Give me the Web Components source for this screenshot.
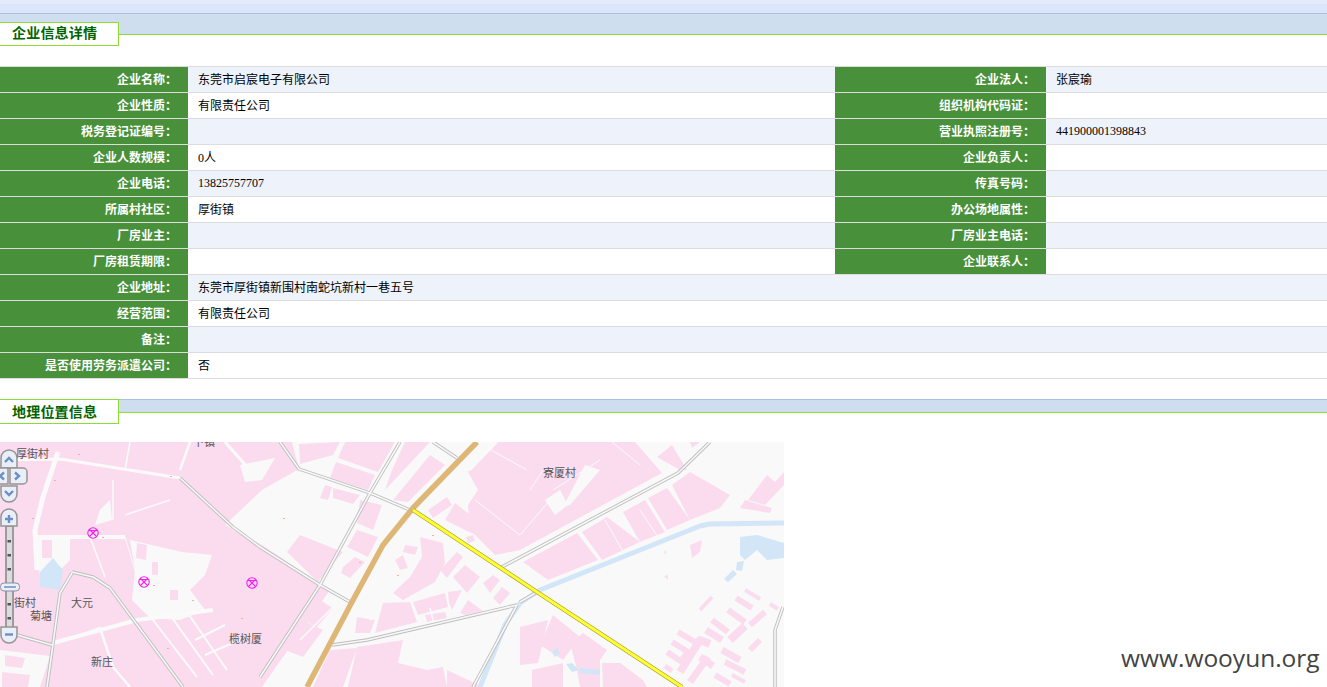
<!DOCTYPE html>
<html lang="zh">
<head>
<meta charset="utf-8">
<title>企业信息详情</title>
<style>
  html, body { margin: 0; padding: 0; background: #fff; overflow: hidden; }
  body { height: 687px; position: relative; font-family: "Liberation Serif", "Noto Sans CJK SC", serif; }
  .top-strip { height: 13px; background: linear-gradient(#e4ecfc 0, #e4ecfc 4px, #dbe6fa 4px); }
</style>
</head>
<body>
<div class="top-strip"></div>

<section-head title-text="企业信息详情" band="22"></section-head>

<info-table>
  <info-row alt><info-cell label="企业名称" wide>东莞市启宸电子有限公司</info-cell><info-cell label="企业法人">张宸瑜</info-cell></info-row>
  <info-row><info-cell label="企业性质" wide>有限责任公司</info-cell><info-cell label="组织机构代码证"></info-cell></info-row>
  <info-row alt><info-cell label="税务登记证编号" wide></info-cell><info-cell label="营业执照注册号" num>441900001398843</info-cell></info-row>
  <info-row><info-cell label="企业人数规模" wide>0人</info-cell><info-cell label="企业负责人"></info-cell></info-row>
  <info-row alt><info-cell label="企业电话" wide num>13825757707</info-cell><info-cell label="传真号码"></info-cell></info-row>
  <info-row><info-cell label="所属村社区" wide>厚街镇</info-cell><info-cell label="办公场地属性"></info-cell></info-row>
  <info-row alt><info-cell label="厂房业主" wide></info-cell><info-cell label="厂房业主电话"></info-cell></info-row>
  <info-row><info-cell label="厂房租赁期限" wide></info-cell><info-cell label="企业联系人"></info-cell></info-row>
  <info-row alt><info-cell label="企业地址" full>东莞市厚街镇新围村南蛇坑新村一巷五号</info-cell></info-row>
  <info-row><info-cell label="经营范围" full>有限责任公司</info-cell></info-row>
  <info-row alt><info-cell label="备注" full></info-cell></info-row>
  <info-row><info-cell label="是否使用劳务派遣公司" full>否</info-cell></info-row>
</info-table>

<section-head title-text="地理位置信息" band="14" flush></section-head>

<geo-map></geo-map>
<water-mark>www.wooyun.org</water-mark>

<script>
class SectionHead extends HTMLElement {
  connectedCallback() {
    const band = this.getAttribute("band");
    const root = this.attachShadow({ mode: "open" });
    root.innerHTML = `
      <style>
        :host { display: grid; }
        :host([flush]) { margin-top: 20px; }
        .band, .title { grid-area: 1 / 1; }
        .band {
          height: ${band}px;
          box-sizing: border-box;
          background: #cfdeee;
          border-top: 1px solid #a9bfe3;
          border-bottom: 1px solid #8fdc35;
        }
        .title {
          justify-self: start;
          width: 119px;
          height: 24px;
          margin-top: ${band == 22 ? 9 : 0}px;
          box-sizing: border-box;
          border: 1px solid #8fdc35;
          border-left: 0;
          background: #fff;
          padding-left: 12px;
          font: bold 14px/19px "Noto Sans CJK SC", sans-serif;
          letter-spacing: 0.2px;
          color: #006400;
        }
        :host([flush]) .title { height: 25px; line-height: 22px; }
      </style>
      <div class="band"></div>
      <div class="title">${this.getAttribute("title-text")}</div>`;
  }
}
customElements.define("section-head", SectionHead);

class InfoTable extends HTMLElement {
  constructor() {
    super();
    this.attachShadow({ mode: "open" }).innerHTML = `
      <style>
        :host { display: block; margin-top: 20px; border-top: 1px solid #dddddd; }
      </style>
      <slot></slot>`;
  }
}
customElements.define("info-table", InfoTable);

class InfoRow extends HTMLElement {
  constructor() {
    super();
    this.attachShadow({ mode: "open" }).innerHTML = `
      <style>
        :host {
          display: flex;
          height: 26px;
          box-sizing: border-box;
          border-bottom: 1px solid #dddddd;
          background: #fff;
        }
        :host([alt]) { background: #edf2fb; }
      </style>
      <slot></slot>`;
  }
}
customElements.define("info-row", InfoRow);

class InfoCell extends HTMLElement {
  constructor() {
    super();
    const label = this.getAttribute("label");
    this.attachShadow({ mode: "open" }).innerHTML = `
      <style>
        :host { display: flex; flex: 1; min-width: 0; }
        :host([wide]) { flex: 0 0 835px; }
        :host([full]) { flex: 1; }
        .label {
          flex: 0 0 188px;
          box-sizing: border-box;
          background: #48903a;
          color: #fff;
          font: bold 12px/23px "Noto Sans CJK SC", sans-serif;
          text-align: right;
          padding-right: 11px;
          white-space: nowrap;
        }
        :host(:not([wide]):not([full])) .label { flex-basis: 211px; padding-right: 11px; }
        .value {
          flex: 1;
          padding-left: 10px;
          font: 12px/27px "Liberation Serif", "Noto Sans CJK SC", serif;
          color: #000;
          white-space: nowrap;
        }
        :host([num]) .value { line-height: 25px; }
      </style>
      <div class="label">${label}：</div>
      <div class="value"><slot></slot></div>`;
  }
}
customElements.define("info-cell", InfoCell);

const PINK = [
  "0,442 292,442 299,469 262,490 225,525 262,545 330,590 262,687 0,687",
  "345,442 395,442 378,472 338,458", "299,444 340,442 333,455 300,464",
  "336,462 375,475 368,490 330,478", "333,488 360,495 353,504 333,498",
  "320,498 325,485 332,487 328,500", "405,442 430,442 385,490 392,470",
  "393,500 430,455 445,465 408,502", "287,552 300,535 343,552 318,582",
  "357,530 378,537 368,557 347,547", "360,500 382,505 373,530 357,523",
  "343,567 355,557 365,562 350,578 341,573", "315,597 333,608 317,627 298,617",
  "302,620 323,630 303,657 285,650", "330,650 357,648 343,687 313,687",
  "357,647 403,640 398,663 427,670 443,667 447,687 348,687", "447,670 483,687 447,687",
  "420,537 443,543 445,563 435,582 403,600 393,593 410,577 422,557",
  "428,510 447,497 452,505 433,518", "445,520 455,503 473,517 476,535 465,530",
  "440,570 457,552 463,557 447,578", "453,577 465,565 480,577 467,593",
  "483,583 493,575 500,580 490,593", "493,598 502,587 510,593 500,605",
  "413,602 445,593 448,607 418,615", "425,615 445,612 447,618 427,622",
  "375,633 383,603 410,602 417,622", "355,633 357,617 375,620 370,633",
  "460,613 468,600 483,611 465,615", "449,603 448,592 462,590 452,610",
  "497,442 635,442 662,473 520,550 495,555 470,530 468,505 478,490 468,472",
  "523,562 577,533 598,560 548,580", "582,532 607,517 640,542 602,560",
  "623,512 645,500 665,532 640,542", "648,498 667,488 690,520 667,530",
  "672,485 690,472 730,495 720,508 690,520",
  "748,500 767,475 775,482 784,472 784,485 765,505", "740,508 745,500 772,508 770,513",
  "657,457 672,445 687,470 680,470", "690,442 700,442 692,448",
  "553,615 580,637 563,660 540,645", "570,643 583,633 607,650 600,660 600,687 580,687 577,670",
  "602,663 620,663 643,680 647,687 603,687", "520,627 548,620 538,663 520,665",
  "532,670 563,663 563,687 532,687",
  "690,545 702,540 700,552 692,558", "664,552 666,550 666,555",
  "664,576 668,575 668,580", "466,537 473,535 475,541 468,543",
  "405,545 418,547 415,555 403,552", "395,560 403,555 408,568 400,570"
];
const LIGHT_AREAS = [
  "130,540 182,552 212,555 205,575 190,590 205,610 180,620 150,618 132,600 135,570",
  "33,535 70,535 70,560 60,570 40,575",
  "563,507 585,465 600,470 570,505", "545,500 560,490 568,505 555,515",
  "100,510 110,500 112,520 95,525", "240,465 275,458 262,480 245,482",
  "0,650 50,656 40,687 0,687"
];
const PINK_INSETS = [
  "137,543 147,545 146,560 136,558", "152,562 158,562 158,575 152,575",
  "170,590 178,590 178,600 170,600", "42,540 52,540 52,558 42,558",
  "5,655 25,658 22,668 5,666", "2,672 30,675 28,687 2,687"
];
const WHITE_ROADS = [
  ["58,452 43,497 35,530 37,570", 5], ["0,460 60,459 180,478", 3], ["40,537 125,537", 4],
  ["53,643 137,620 213,610", 4], ["153,620 197,677", 2], ["170,615 213,675", 2],
  ["187,612 227,670", 2], ["195,640 225,625", 2], ["205,655 240,640", 2],
  ["90,537 105,577", 1.5], ["125,537 137,577", 1], ["77,637 100,628 113,667 130,687", 2.5],
  ["130,442 125,470", 1.5], ["190,442 180,470", 2.5],
  ["225,442 250,470", 3], ["113,480 113,520", 1.5], ["125,515 170,500", 1.5],
  ["553,490 600,460", 1], ["612,442 640,465", 1],
  ["497,442 470,470", 2], ["484,446 527,470", 1], ["475,500 520,535 550,500", 1],
  ["640,510 660,540", 1], ["605,520 625,555", 1], ["543,470 530,490", 1],
  ["370,620 380,610", 2], ["300,640 340,600", 1.5], ["430,608 438,640", 1.5]
];
const FACTORY = [
  ["678,632 695,642", 6], ["672,642 688,652 680,662", 6], ["667,652 682,662", 6], ["665,666 672,671", 5],
  ["680,672 700,640 710,644", 8], ["700,657 713,666", 7], ["690,682 708,657", 7],
  ["712,620 728,632", 6], ["706,630 722,640", 7], ["728,610 745,622", 6], ["736,598 752,608", 6],
  ["745,590 760,599", 4], ["770,604 778,609", 4], ["730,640 745,626", 8], ["722,650 740,660", 7],
  ["725,662 745,672", 6], ["715,675 730,684", 6], ["750,625 765,612", 6], ["700,610 712,597", 4],
  ["750,650 760,640", 6], ["732,675 745,682", 4]
];
const GRAY_ROADS = [
  "280,442 299,469 370,493 410,510", "400,442 370,493 320,585 260,677",
  "433,442 457,458", "180,478 233,527 260,547 320,585 350,602",
  "72,572 93,577 110,588 183,687", "72,573 60,593 47,687", "17,635 52,645",
  "332,645 367,640 517,605", "517,605 473,687", "710,442 678,473 500,568",
  "520,602 537,592", "783,607 775,630 775,687"
];

class GeoMap extends HTMLElement {
  constructor() {
    super();
    const poly = (pts, fill) => `<polygon points="${pts}" fill="${fill}"/>`;
    const line = (pts, color, w) => `<polyline points="${pts}" fill="none" stroke="${color}" stroke-width="${w}" stroke-linejoin="round"/>`;
    const marker = (x, y) => `<g fill="none" stroke="#f020f0" stroke-width="1.1"><circle cx="${x}" cy="${y}" r="5.2"/><path d="M${x - 3.5} ${y - 3.5}L${x + 3.5} ${y + 3.5}M${x + 3.5} ${y - 3.5}L${x - 3.5} ${y + 3.5}M${x - 4} ${y - 2.5}H${x + 4}"/></g>`;
    const label = (x, y, s) => `<text x="${x}" y="${y}">${s}</text>`;
    const dots = [[78,454],[54,480],[32,518],[170,476],[102,537],[153,585],[192,600],[241,618],[167,648],[283,518],[359,562],[397,575],[432,535]];
    const ticks = [540, 554, 568, 603, 617].map(y => `<rect x="7.5" y="${y}" width="3.5" height="2.5" fill="#555"/>`).join("");
    this.attachShadow({ mode: "open" }).innerHTML = `
      <style>
        :host { display: block; width: 784px; height: 245px; margin-top: 18px; overflow: hidden; }
        svg { display: block; }
        text { font: 11px "Noto Sans CJK SC", sans-serif; fill: #555; }
      </style>
      <svg width="784" height="245" viewBox="0 442 784 245">
        <rect x="0" y="442" width="784" height="245" fill="#f9f9f9"/>
        ${PINK.map(p => poly(p, "#fbdcef")).join("")}
        ${LIGHT_AREAS.map(p => poly(p, "#f9f9f9")).join("")}
        ${PINK_INSETS.map(p => poly(p, "#fbdcef")).join("")}
        ${WHITE_ROADS.map(r => line(r[0], "#fafafa", r[1])).join("")}
        ${FACTORY.map(r => line(r[0], "#fbdcef", r[1])).join("")}
        ${poly("740,537 757,535 784,543 784,558 767,560 757,550 745,560 740,555", "#d2e6f7")}
        ${poly("737,562 744,561 742,571 736,570", "#d2e6f7")}
        ${poly("724,579 733,570 737,574 728,582", "#d2e6f7")}
        ${poly("40,572 53,558 63,570 60,590 40,587", "#d2e6f7")}
        ${poly("552,652 557,648 560,653 555,657", "#d2e6f7")}
        ${poly("566,664 572,663 579,670 572,672", "#d2e6f7")}
        ${poly("580,668 600,670 600,675 579,673", "#d2e6f7")}
        ${line("784,523 710,524 700,526 540,590 520,603 505,625 480,687", "#d2e6f7", 5)}
        ${GRAY_ROADS.map(p => line(p, "#bdbdbd", 3.4)).join("")}
        ${GRAY_ROADS.map(p => line(p, "#f8f8f8", 1.6)).join("")}
        ${dots.map(d => `<rect x="${d[0]}" y="${d[1]}" width="2" height="1" fill="#f8b090"/>`).join("")}
        ${line("477,442 413,508 383,545 353,600 307,687", "#deb776", 5.5)}
        ${line("413,510 537,592 682,687", "#a8a030", 4.4)}
        ${line("413,510 537,592 682,687", "#ffff33", 3)}
        ${label(16, 458, "厚街村")}${label(14, 607, "街村")}${label(30, 620, "菊塘")}
        ${label(71, 607, "大元")}${label(91, 666, "新庄")}${label(229, 643, "榄树厦")}
        ${label(543, 477, "寮厦村")}${label(193, 446, "下镇")}
        ${marker(93, 533)}${marker(144, 582)}${marker(252, 583)}
        <g stroke="#949494" stroke-width="1.5" fill="#eaeef6">
          <path d="M1 468V458a8 8 0 0 1 16 0V468Z"/>
          <path d="M-8 468H8V484H-8Z"/>
          <path d="M10 468H23a4 4 0 0 1 4 4V480a4 4 0 0 1-4 4H10Z"/>
          <path d="M1 486H17V494a8 8 0 0 1-16 0Z"/>
          <rect x="6" y="526" width="7" height="102" fill="#dcdcdc" stroke-width="1.8"/>
          <path d="M1 526V517a8 8 0 0 1 16 0V526Z"/>
          <path d="M1 627H17V635a8 8 0 0 1-16 0Z"/>
        </g>
        ${ticks}
        <rect x="0.5" y="583" width="19" height="8" rx="3.5" fill="#eaeef6" stroke="#8a8fa0"/>
        <g fill="none" stroke="#6a8fc8" stroke-width="2.4">
          <path d="M5 462L9 458L13 462"/>
          <path d="M4 472.5L0 476L4 479.5"/>
          <path d="M15 472.5L19 476L15 479.5"/>
          <path d="M5 491L9 495L13 491"/>
          <path d="M5 519H13M9 515V523"/>
          <path d="M5 634.5H13"/>
          <path d="M4 587H16" stroke-width="1.5"/>
        </g>
      </svg>`;
  }
}
customElements.define("geo-map", GeoMap);

class WaterMark extends HTMLElement {
  constructor() {
    super();
    this.attachShadow({ mode: "open" }).innerHTML = `
      <style>
        :host {
          position: absolute;
          left: 1121px;
          top: 642px;
          font: 24.5px/32px "Open Sans", sans-serif;
          color: #444;
          white-space: nowrap;
        }
      </style>
      <slot></slot>`;
  }
}
customElements.define("water-mark", WaterMark);
</script>
</body>
</html>
